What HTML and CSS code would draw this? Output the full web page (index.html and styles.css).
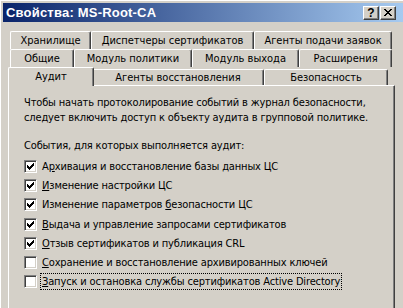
FILE: index.html
```html
<!DOCTYPE html>
<html lang="ru">
<head>
    <meta charset="UTF-8">
    <title>Свойства: MS-Root-CA</title>
    <link rel="stylesheet" href="styles.css">
</head>
<body>
<div class="window">
    <div class="titlebar">
        <span class="title">Свойства: MS-Root-CA</span>
        <div class="caption-buttons">
            <span class="cap-btn">?</span>
            <span class="cap-btn cap-close">
                <svg width="8" height="7" viewBox="0 0 8 7" shape-rendering="crispEdges">
                    <path d="M0 0h2v1h1v1h2v-1h1v-1h2v1h-1v1h-1v1h-1v1h1v1h1v1h1v1h-2v-1h-1v-1h-2v1h-1v1h-2v-1h1v-1h1v-1h1v-1h-1v-1h-1v-1h-1z" fill="#000"/>
                </svg>
            </span>
        </div>
    </div>
    <div class="client">
        <div class="tabs">
            <div class="tab-row">
                <div class="tab w-store">Хранилище</div>
                <div class="tab w-mgr">Диспетчеры сертификатов</div>
                <div class="tab w-enroll">Агенты подачи заявок</div>
            </div>
            <div class="tab-row">
                <div class="tab w-general">Общие</div>
                <div class="tab w-policy">Модуль политики</div>
                <div class="tab w-exit">Модуль выхода</div>
                <div class="tab w-ext">Расширения</div>
            </div>
            <div class="tab-row front">
                <div class="tab w-audit selected">Аудит</div>
                <div class="tab w-recovery">Агенты восстановления</div>
                <div class="tab w-security">Безопасность</div>
            </div>
        </div>
        <div class="panel">
            <p class="intro">Чтобы начать протоколирование событий в журнал безопасности,<br>следует включить доступ к объекту аудита в групповой политике.</p>
            <p class="caption">События, для которых выполняется аудит:</p>
            <ul class="checks">
                <li><span class="box on"></span><span class="label">А<u>р</u>хивация и восстановление базы данных ЦС</span></li>
                <li><span class="box on"></span><span class="label"><u>И</u>зменение настройки ЦС</span></li>
                <li><span class="box on"></span><span class="label">Изменение параметров <u>б</u>езопасности ЦС</span></li>
                <li><span class="box on"></span><span class="label"><u>В</u>ыдача и управление запросами сертификатов</span></li>
                <li><span class="box on"></span><span class="label"><u>О</u>тзыв сертификатов и публикация CRL</span></li>
                <li><span class="box"></span><span class="label"><u>С</u>охранение и восстановление архивированных ключей</span></li>
                <li><span class="box"></span><span class="label focus"><u>З</u>апуск и остановка службы сертификатов Active Directory</span></li>
            </ul>
        </div>
    </div>
</div>
</body>
</html>
```

FILE: styles.css
```css
* {
    margin: 0;
    padding: 0;
    box-sizing: border-box;
}

body {
    width: 403px;
    height: 308px;
    overflow: hidden;
    background: #d4d0c8;
    font-family: "DejaVu Sans Condensed", "DejaVu Sans", sans-serif;
    font-stretch: condensed;
    font-size: 11px;
    color: #000;
}

.window {
    height: 308px;
    padding: 2px 0 0 2px;
    border-left: 1px solid #fff;
    border-top: 1px solid #fff;
    background: #d4d0c8;
}

/* заголовок окна */
.titlebar {
    height: 19px;
    display: flex;
    align-items: center;
    justify-content: space-between;
    padding: 0 7px 0 3px;
    background: linear-gradient(to right, #0a246a, #a6caf0);
}

.title {
    color: #fff;
    font-family: "Liberation Sans", Arial, sans-serif;
    font-stretch: normal;
    font-weight: bold;
    font-size: 13px;
    letter-spacing: 0.2px;
}

.caption-buttons {
    display: flex;
    gap: 1px;
}

.cap-btn {
    width: 16px;
    height: 14px;
    display: flex;
    align-items: center;
    justify-content: center;
    background: #d4d0c8;
    border: 1px solid;
    border-color: #fff #404040 #404040 #fff;
    box-shadow: inset -1px -1px 0 #808080;
    font-family: "Liberation Sans", Arial, sans-serif;
    font-stretch: normal;
    font-weight: bold;
    font-size: 12px;
    line-height: 1;
}

/* вкладки */
.client {
    padding: 7px 8px 0 5px;
}

.tabs {
    padding: 2px 2px 0 2px;
}

.tab-row {
    display: flex;
    height: 18px;
}

.tab {
    height: 18px;
    display: flex;
    align-items: center;
    justify-content: center;
    border-left: 1px solid #fff;
    border-top: 1px solid #fff;
    border-right: 1px solid #404040;
    border-radius: 2px 2px 0 0;
    box-shadow: inset -1px 0 0 #808080;
    white-space: nowrap;
}

.front .tab {
    margin-top: 2px;
    height: 16px;
}

.front .tab.selected {
    position: relative;
    z-index: 2;
    margin: 0 -2px 0 -2px;
    height: 19px;
    background: #d4d0c8;
    padding-bottom: 2px;
}

.w-store { width: 81px; }
.w-mgr { width: 163px; }
.w-enroll { width: 138px; }
.w-general { width: 64px; }
.w-policy { width: 118px; }
.w-exit { width: 107px; }
.w-ext { width: 93px; }
.w-audit { width: 86px; }
.w-recovery { width: 172px; }
.w-security { width: 124px; }

.panel {
    height: 230px;
    border-left: 1px solid #fff;
    border-top: 1px solid #fff;
    border-right: 1px solid #404040;
    box-shadow: inset -1px 0 0 #808080;
    padding: 9px 10px 0 15px;
    letter-spacing: -0.15px;
}

.intro {
    line-height: 15px;
    white-space: nowrap;
}

.caption {
    margin-top: 13px;
    line-height: 15px;
}

.checks {
    list-style: none;
    margin-top: 4px;
}

.checks li {
    display: flex;
    align-items: center;
    height: 19.2px;
}

.box {
    width: 13px;
    height: 13px;
    flex: none;
    background: #fff;
    border: 1px solid;
    border-color: #808080 #fff #fff #808080;
    box-shadow: inset 1px 1px 0 #404040, inset -1px -1px 0 #d4d0c8;
    margin-right: 3px;
    display: flex;
    align-items: center;
    justify-content: center;
}

.box.on::after {
    content: "";
    width: 7px;
    height: 7px;
    background: url("data:image/svg+xml,%3Csvg xmlns='http://www.w3.org/2000/svg' width='7' height='7' shape-rendering='crispEdges'%3E%3Cpath d='M0 2h1v3h-1zM1 3h1v3h-1zM2 4h1v3h-1zM3 3h1v3h-1zM4 2h1v3h-1zM5 1h1v3h-1zM6 0h1v3h-1z' fill='%23000'/%3E%3C/svg%3E") no-repeat;
}

.label {
    padding: 0 1px;
    line-height: 15px;
    border: 1px solid transparent;
    white-space: nowrap;
}

.label.focus {
    border: 1px dotted #000;
}
```
